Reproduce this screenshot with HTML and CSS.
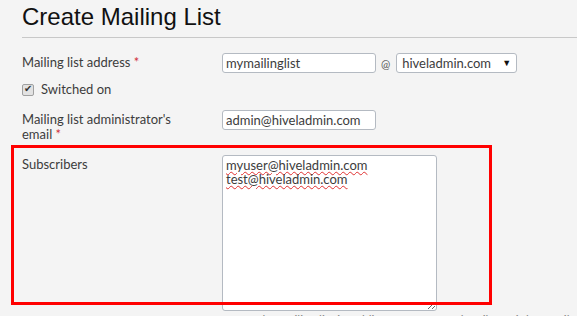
FILE: index.html
```html
<!DOCTYPE html>
<html>
    <head>
        <meta http-equiv="Content-Type" content="text/html; charset=utf-8"/>
        <link rel="stylesheet" href="styles.css">
    </head>
    <body>
        <div class='page'>
            <h1 class='page_title'>Create Mailing List</h1>
            <div class='form'>
                <div class='form_row row_address'>
                    <label class='field_label'>Mailing list address <span class='required'>*</span></label>
                    <div class='field'>
                        <input class='text_input' type='text' value='mymailinglist'>
                        <span class='at_sign'>@</span>
                        <span class='select_wrap'>
                            <select class='domain_select'>
                                <option>hiveladmin.com</option>
                            </select>
                        </span>
                    </div>
                </div>
                <div class='form_row row_switch'>
                    <label class='check_label'><input class='check_box' type='checkbox' checked>Switched on</label>
                </div>
                <div class='form_row row_admin'>
                    <label class='field_label'>Mailing list administrator's email <span class='required'>*</span></label>
                    <div class='field'>
                        <input class='text_input' type='text' value='admin@hiveladmin.com'>
                    </div>
                </div>
                <div class='form_row row_subscribers'>
                    <label class='field_label'>Subscribers</label>
                    <div class='field field_column'>
                        <textarea class='text_area' spellcheck='false'>myuser@hiveladmin.com
test@hiveladmin.com</textarea>
                        <div class='help_text'>If the mailing list is public, anyone can subscribe to it by email</div>
                    </div>
                </div>
            </div>
            <div class='highlight_box'></div>
        </div>
    </body>
</html>
```

FILE: styles.css
```css
body
{
    margin: 0;
    background-color: #f4f4f4;
    color: #3c3c3c;
    font-family: Lato, "Liberation Sans", sans-serif;
    font-size: 13px;
    overflow: hidden;
}
.page
{
    position: relative;
    padding: 0 0 0 22px;
}
.page_title
{
    margin: 0;
    padding: 5px 0 8px 0;
    font-family: "Liberation Sans", Arial, sans-serif;
    font-weight: normal;
    font-size: 24px;
    line-height: 24px;
    color: #111;
    border-bottom: 1px solid #c8c8c8;
}
.form
{
    display: flex;
    flex-direction: column;
}
.form_row
{
    display: flex;
    align-items: flex-start;
}
.row_address
{
    margin-top: 15px;
}
.row_switch
{
    margin-top: 9px;
}
.row_admin
{
    margin-top: 13px;
}
.row_subscribers
{
    margin-top: 13px;
}
.field_label
{
    width: 170px;
    flex: none;
    margin-right: 30px;
    line-height: 15px;
    padding-top: 2px;
}
.required
{
    color: #d0303a;
}
.field
{
    display: flex;
    align-items: center;
}
.field_column
{
    flex-direction: column;
    align-items: flex-start;
}
.text_input
{
    box-sizing: border-box;
    width: 154px;
    height: 20px;
    margin: 0;
    padding: 0 3px;
    border: 1px solid #b4bac2;
    border-radius: 3px;
    background-color: #fff;
    font-family: inherit;
    font-size: 13px;
    color: #3c3c3c;
}
.at_sign
{
    margin: 0 6px 0 5px;
    font-size: 11px;
    color: #555;
}
.select_wrap
{
    position: relative;
    display: inline-block;
}
.select_wrap:after/*the arrow sits over the select*/
{
    content: '\25BC';
    position: absolute;
    right: 6px;
    top: 4px;
    font-size: 9px;
    color: #111;
    pointer-events: none;
}
.domain_select
{
    -webkit-appearance: none;
    appearance: none;
    box-sizing: border-box;
    width: 121px;
    height: 20px;
    margin: 0;
    padding: 0 0 0 5px;
    border: 1px solid #b4bac2;
    border-radius: 3px;
    background-color: #fff;
    font-family: inherit;
    font-size: 13px;
    color: #3c3c3c;
}
.check_label
{
    display: flex;
    align-items: center;
    line-height: 15px;
}
.check_box
{
    -webkit-appearance: none;
    appearance: none;
    position: relative;
    box-sizing: border-box;
    width: 12px;
    height: 12px;
    margin: 0 7px 0 0;
    border: 1px solid #a0a0a0;
    border-radius: 2px;
    background-color: #e2e2e2;
}
.check_box:checked:after
{
    content: '\2714';
    position: absolute;
    left: 1px;
    top: -2px;
    font-size: 10px;
    color: #333;
}
.text_area
{
    box-sizing: border-box;
    width: 215px;
    height: 156px;
    margin: 0;
    padding: 2px 3px;
    border: 1px solid #b4bac2;
    border-radius: 3px;
    background-color: #fff;
    font-family: inherit;
    font-size: 13px;
    line-height: 14px;
    color: #3c3c3c;
    text-decoration: underline wavy #e03030;
    text-decoration-thickness: 1px;
    text-underline-offset: 1px;
}
.help_text
{
    margin: 2px 0 0 26px;
    font-size: 12px;
    line-height: 14px;
    color: #888;
    white-space: nowrap;
}
.highlight_box/*red frame over the subscribers row*/
{
    position: absolute;
    left: 11px;
    top: 145px;
    width: 475px;
    height: 154px;
    border: 3px solid #ff0000;
    pointer-events: none;
}
```
